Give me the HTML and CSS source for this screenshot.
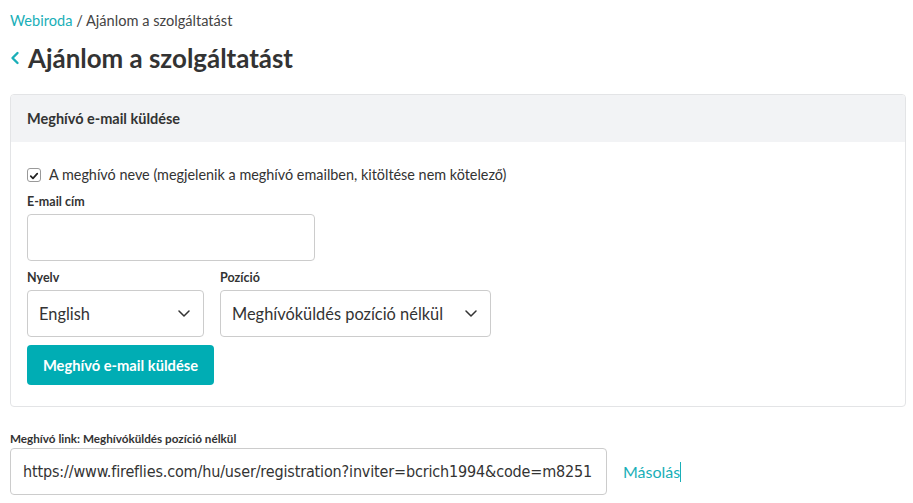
FILE: index.html
```html
<!DOCTYPE html>
<html lang="hu">
<head>
    <meta charset="UTF-8">
    <title>Ajánlom a szolgáltatást</title>
    <link rel="stylesheet" href="styles.css">
</head>
<body>
    <div class="page">
        <div class="breadcrumb">
            <a href="#">Webiroda</a> / Ajánlom a szolgáltatást
        </div>

        <h1 class="page-title">
            <span class="back-icon">
                <svg viewBox="0 0 10 14" width="10" height="14"><path d="M7.5 2 L2.5 7 L7.5 12" fill="none" stroke="currentColor" stroke-width="2.4" stroke-linecap="round" stroke-linejoin="round"/></svg>
            </span>
            Ajánlom a szolgáltatást
        </h1>

        <div class="card">
            <div class="card-header">Meghívó e-mail küldése</div>
            <div class="card-body">
                <label class="check-row">
                    <span class="checkbox">
                        <svg viewBox="0 0 14 14" width="14" height="14"><path d="M3.2 7.2 L5.8 9.8 L10.8 4.2" fill="none" stroke="#222" stroke-width="2" stroke-linecap="round" stroke-linejoin="round"/></svg>
                    </span>
                    A meghívó neve (megjelenik a meghívó emailben, kitöltése nem kötelező)
                </label>

                <div class="field">
                    <label class="field-label">E-mail cím</label>
                    <input type="text" class="text-input email-input">
                </div>

                <div class="select-row">
                    <div class="field">
                        <label class="field-label">Nyelv</label>
                        <div class="select lang-select">
                            <span>English</span>
                            <svg viewBox="0 0 12 7" width="12" height="7"><path d="M1 1 L6 6 L11 1" fill="none" stroke="#333" stroke-width="1.5" stroke-linecap="round" stroke-linejoin="round"/></svg>
                        </div>
                    </div>
                    <div class="field">
                        <label class="field-label">Pozíció</label>
                        <div class="select pos-select">
                            <span>Meghívóküldés pozíció nélkül</span>
                            <svg viewBox="0 0 12 7" width="12" height="7"><path d="M1 1 L6 6 L11 1" fill="none" stroke="#333" stroke-width="1.5" stroke-linecap="round" stroke-linejoin="round"/></svg>
                        </div>
                    </div>
                </div>

                <button type="button" class="send-btn">Meghívó e-mail küldése</button>
            </div>
        </div>

        <div class="link-section">
            <label class="link-label">Meghívó link: Meghívóküldés pozíció nélkül</label>
            <div class="link-row">
                <div class="link-box">https://www.fireflies.com/hu/user/registration?inviter=bcrich1994&amp;code=m8251</div>
                <a href="#" class="copy-link">Másolás<span class="caret"></span></a>
            </div>
        </div>
    </div>
</body>
</html>
```

FILE: styles.css
```css
* {
    margin: 0;
    padding: 0;
    box-sizing: border-box;
}

body {
    font-family: 'Lato', 'Open Sans', sans-serif;
    background: #fff;
    color: #333;
}

.page {
    padding: 12px 7px 0 10px;
}

.breadcrumb {
    font-size: 14.6px;
    color: #444;
    line-height: 18px;
}

.breadcrumb a {
    color: #1aafb8;
    text-decoration: none;
}

.page-title {
    display: flex;
    align-items: center;
    margin-top: 13px;
    font-size: 25.9px;
    font-weight: bold;
    color: #333;
    line-height: 30px;
}

.back-icon {
    display: flex;
    color: #1aafb8;
    margin-right: 8px;
}

.card {
    margin-top: 21px;
    border: 1px solid #e3e4e6;
    border-radius: 4px;
    overflow: hidden;
}

.card-header {
    background: #f2f3f5;
    height: 47px;
    padding: 0 16px;
    display: flex;
    align-items: center;
    font-size: 14.5px;
    font-weight: bold;
    color: #333;
}

.card-body {
    padding: 25px 16px 21px;
}

.check-row {
    display: flex;
    align-items: center;
    font-size: 14.4px;
    color: #333;
    line-height: 16px;
}

.checkbox {
    width: 14px;
    height: 14px;
    border: 1px solid #999;
    border-radius: 3px;
    margin-right: 8px;
    display: flex;
}

.field {
    display: flex;
    flex-direction: column;
}

.field-label {
    font-size: 12.5px;
    font-weight: bold;
    color: #333;
    line-height: 14px;
    margin-bottom: 5px;
}

.check-row + .field {
    margin-top: 12px;
}

.text-input {
    height: 47px;
    border: 1px solid #ccc;
    border-radius: 4px;
    background: #fff;
    font-size: 16px;
}

.email-input {
    width: 288px;
}

.select-row {
    display: flex;
    gap: 16px;
    margin-top: 10px;
}

.select {
    height: 47px;
    border: 1px solid #ccc;
    border-radius: 4px;
    padding: 0 13px 0 11px;
    display: flex;
    align-items: center;
    justify-content: space-between;
    font-size: 16.4px;
    color: #333;
}

.lang-select {
    width: 177px;
}

.pos-select {
    width: 271px;
}

.send-btn {
    margin-top: 8px;
    width: 187px;
    height: 40px;
    border: none;
    border-radius: 4px;
    background: #00adb4;
    color: #fff;
    font-family: inherit;
    font-size: 14.7px;
    font-weight: bold;
}

.link-section {
    margin-top: 24px;
}

.link-label {
    display: block;
    font-size: 11.7px;
    font-weight: bold;
    color: #333;
    line-height: 14px;
    margin-bottom: 3px;
}

.link-row {
    display: flex;
    align-items: center;
}

.link-box {
    width: 597px;
    height: 47px;
    border: 1px solid #ccc;
    border-radius: 4px;
    padding: 0 12px;
    display: flex;
    align-items: center;
    font-family: 'DejaVu Sans Condensed', 'DejaVu Sans', sans-serif;
    font-size: 16px;
    letter-spacing: -0.15px;
    color: #333;
    white-space: nowrap;
    overflow: hidden;
}

.copy-link {
    margin-left: 16px;
    font-size: 16px;
    color: #1aafb8;
    text-decoration: none;
    display: flex;
    align-items: center;
}

.caret {
    width: 1px;
    height: 20px;
    background: #1aafb8;
}
```
